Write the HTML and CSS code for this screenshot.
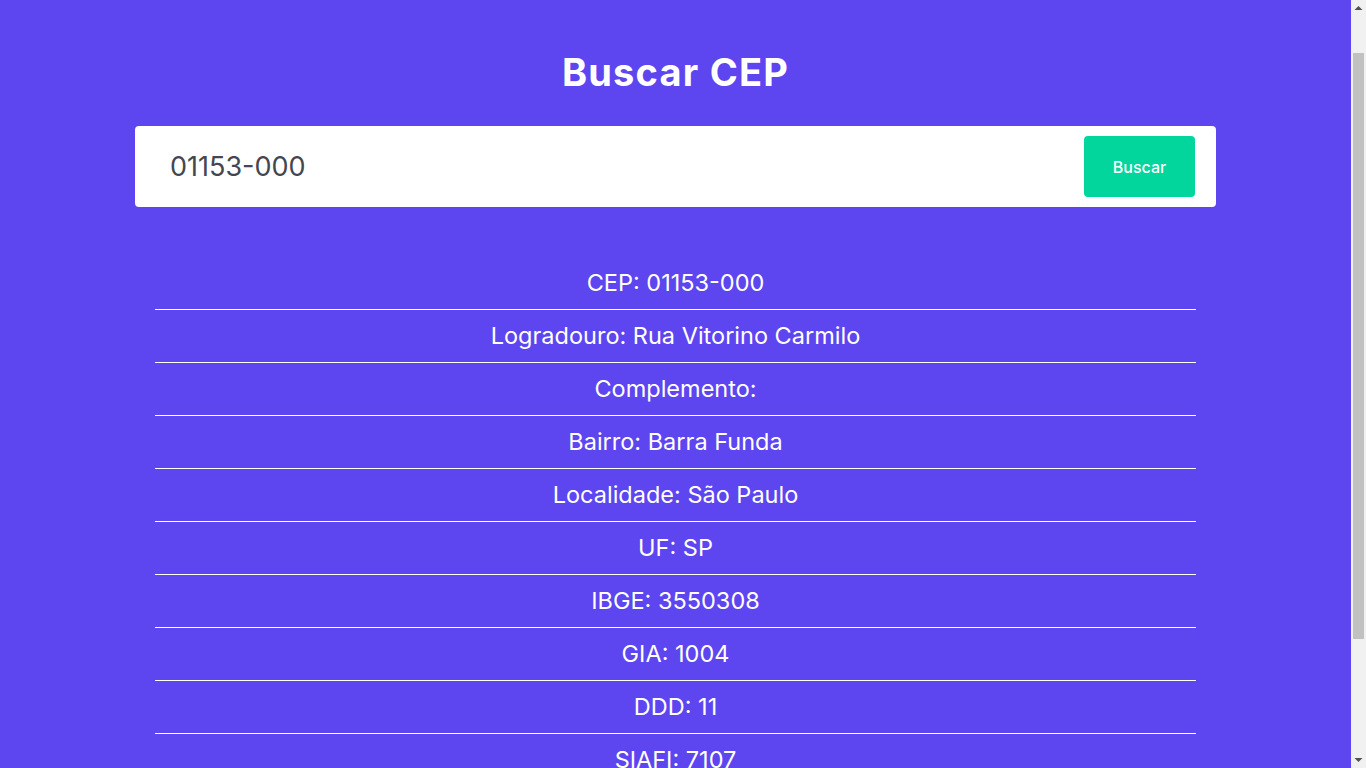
FILE: index.html
```html
<!DOCTYPE html>
<html lang="pt-BR">
<head>
<meta charset="utf-8">
<title>Buscar CEP</title>
<link rel="stylesheet" href="styles.css">
</head>
<body>
<main class="container">
  <h1 class="title">Buscar CEP</h1>
  <form class="search">
    <input class="search-input" type="text" value="01153-000">
    <button class="search-button" type="button">Buscar</button>
  </form>
  <ul class="results">
    <li class="result">CEP: 01153-000</li>
    <li class="result">Logradouro: Rua Vitorino Carmilo</li>
    <li class="result">Complemento: </li>
    <li class="result">Bairro: Barra Funda</li>
    <li class="result">Localidade: São Paulo</li>
    <li class="result">UF: SP</li>
    <li class="result">IBGE: 3550308</li>
    <li class="result">GIA: 1004</li>
    <li class="result">DDD: 11</li>
    <li class="result">SIAFI: 7107</li>
  </ul>
</main>
<div class="scrollbar" aria-hidden="true">
  <svg class="scroll-arrow" width="15" height="17" viewBox="0 0 15 17"><path d="M3.5 10 L7.5 6 L11.5 10 Z" fill="#505050"/></svg>
  <div class="scroll-track"><div class="scroll-thumb"></div></div>
  <svg class="scroll-arrow" width="15" height="17" viewBox="0 0 15 17"><path d="M3.5 7 L11.5 7 L7.5 11 Z" fill="#505050"/></svg>
</div>
</body>
</html>
```
FILE: styles.css
```css
* { box-sizing: border-box; }
html { background: #5d45f0; }
body {
  margin: 0;
  padding-right: 15px;
  background: #5d45f0;
  font-family: Inter, "Open Sans", "Liberation Sans", sans-serif;
  color: #fff;
}
.container {
  max-width: 1081px;
  margin: 0 auto;
  padding: 50px 0 170px;
}
.title {
  margin: 0;
  font-size: 38px;
  letter-spacing: 1.2px;
  line-height: 44px;
  font-weight: 700;
  text-align: center;
  color: #fff;
}
.search {
  margin: 32px 0 0;
  background: #fff;
  border-radius: 4px;
  display: flex;
  align-items: center;
  padding: 10px 21px 10px 35px;
}
.search-input {
  flex: 1;
  border: none;
  outline: none;
  background: transparent;
  font-family: inherit;
  font-size: 27px;
  color: #444650;
  padding: 0;
}
.search-button {
  width: 111px;
  height: 61px;
  border: none;
  border-radius: 4px;
  background: #02d69c;
  color: #fff;
  font-family: inherit;
  font-size: 16px;
  font-weight: 500;
}
.results {
  list-style: none;
  margin: 50px 0 0;
  padding: 0 20px;
}
.result {
  padding: 13px 0;
  line-height: 26px;
  font-size: 23.5px;
  text-align: center;
  border-bottom: 1px solid #fff;
  min-height: 53px;
}
.scrollbar {
  position: fixed;
  top: 0;
  right: 0;
  width: 15px;
  height: 100vh;
  background: #f1f1f1;
  display: flex;
  flex-direction: column;
}
.scroll-arrow {
  display: block;
  flex: none;
}
.scroll-track {
  flex: 1;
  padding: 36px 2px 112px;
}
.scroll-thumb {
  height: 100%;
  background: #c1c1c1;
}
```
